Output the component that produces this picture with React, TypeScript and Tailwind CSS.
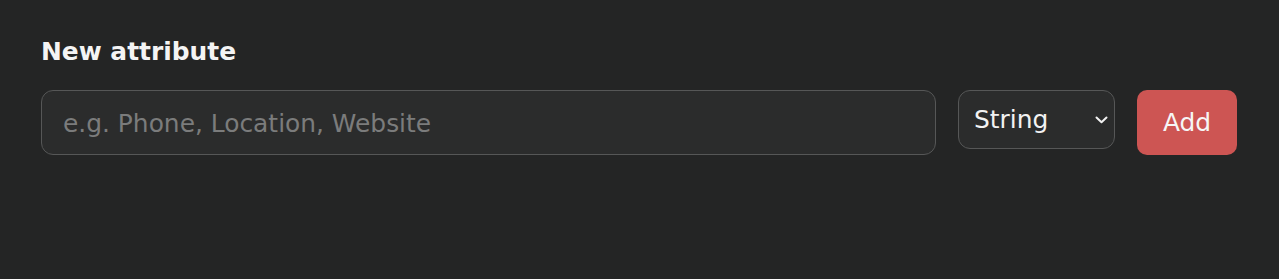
import { useState } from 'react';

// Form row for adding a custom attribute
export default function App() {
  const [name, setName] = useState("");
  const [type, setType] = useState("String");

  return (
    <main className="min-h-screen w-full bg-[#242525] text-[#f2f2f2] px-[41px] pt-[37px] font-['DejaVu_Sans',sans-serif] text-[24.9px]">
      <h2 className="font-bold leading-[normal] text-[#f4f4f4]">New attribute</h2>

      <div className="mt-[24px] flex items-start">
        <input
          value={name}
          onChange={(e) => setName(e.target.value)}
          placeholder="e.g. Phone, Location, Website"
          className="w-[895px] shrink-0 h-[65px] rounded-[12px] border border-[#565757] bg-[#2b2c2c] px-[21px] pt-[2px] leading-[1.2] text-[#f2f2f2] placeholder:text-[#7b7c7c] outline-none"
        />

        <div className="relative ml-[22px] w-[157px] shrink-0">
          <select
            value={type}
            onChange={(e) => setType(e.target.value)}
            className="w-full h-[59px] appearance-none rounded-[12px] border border-[#565757] bg-[#2b2c2c] pl-[15px] pr-[36px] leading-[1.2] text-[#f2f2f2] outline-none"
          >
            <option>String</option>
            <option>Number</option>
            <option>Boolean</option>
            <option>Date</option>
          </select>
          <svg
            className="pointer-events-none absolute left-[137px] top-[26px]"
            width="13"
            height="8"
            viewBox="0 0 13 8"
            fill="none"
          >
            <path d="M1.5 1.5 L6.5 6.2 L11.5 1.5" stroke="#f2f2f2" strokeWidth="2" strokeLinecap="round" strokeLinejoin="round" />
          </svg>
        </div>

        <button className="ml-[22px] shrink-0 w-[100px] h-[65px] rounded-[10px] bg-[#cd5553] text-[#f6f6f6] leading-[1.2]">
          Add
        </button>
      </div>
    </main>
  );
}
